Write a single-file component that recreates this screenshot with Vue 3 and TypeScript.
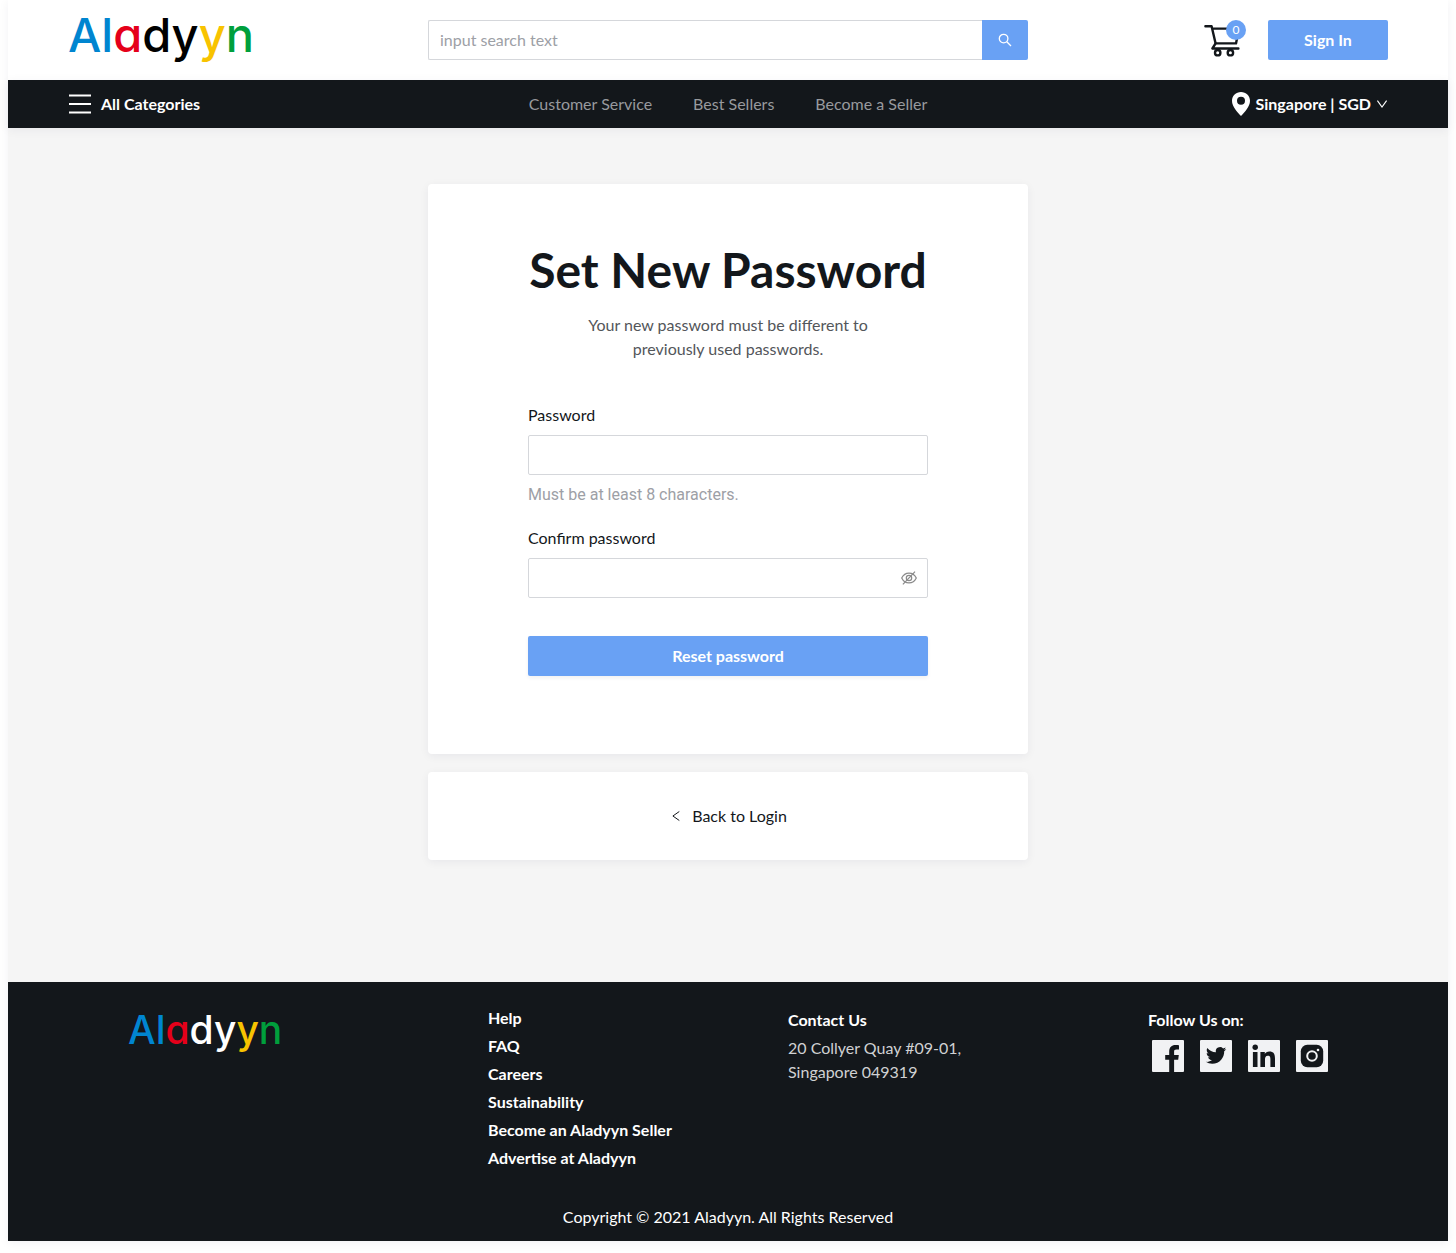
<script setup lang="ts">
import { ref } from 'vue'

interface Letter {
  char: string
  tone: string
}

const brand: Letter[] = [
  { char: 'A', tone: 'blue' },
  { char: 'l', tone: 'blue' },
  { char: 'a', tone: 'red' },
  { char: 'd', tone: 'ink' },
  { char: 'y', tone: 'ink' },
  { char: 'y', tone: 'yellow' },
  { char: 'n', tone: 'green' },
]

const navLinks: string[] = ['Customer Service', 'Best Sellers', 'Become a Seller']
const footerLinks: string[] = [
  'Help',
  'FAQ',
  'Careers',
  'Sustainability',
  'Become an Aladyyn Seller',
  'Advertise at Aladyyn',
]

const search = ref('')
const password = ref('')
const confirmation = ref('')
const revealed = ref(false)
const cartCount = ref(0)
</script>

<template>
  <div class="page">
    <header class="topbar">
      <a class="logo" href="#"><span v-for="(l, i) in brand" :key="i" :class="l.tone">{{ l.char }}</span></a>
      <form class="search" role="search" @submit.prevent>
        <input v-model="search" type="text" placeholder="input search text" aria-label="Search" />
        <button type="submit" aria-label="Search">
          <svg width="14" height="14" viewBox="0 0 14 14" fill="none" stroke="currentColor" stroke-width="1.3">
            <circle cx="5.6" cy="5.6" r="4.3" />
            <path d="M8.8 8.8 13 13" />
          </svg>
        </button>
      </form>
      <div class="account">
        <a class="cart" href="#" aria-label="Cart">
          <svg width="36" height="32" viewBox="0 0 36 32" fill="none" stroke="currentColor" stroke-width="2.4" stroke-linecap="round" stroke-linejoin="round">
            <path d="M1.400 2.200H7.600L11.600 19.400H32L35 4.600H8.200" />
            <path d="M11.600 19.400 8.400 24.500H34.400" />
            <circle cx="13.700" cy="28.700" r="2.700" />
            <circle cx="26.400" cy="28.700" r="2.700" />
          </svg>
          <span class="badge">{{ cartCount }}</span>
        </a>
        <button class="primary sign-in" type="button">Sign In</button>
      </div>
    </header>

    <nav class="navbar">
      <button class="plain categories" type="button">
        <svg width="23" height="20" viewBox="0 0 23 20" stroke="currentColor" stroke-width="2">
          <path d="M1 1.6H23M1 10H23M1 18.4H23" />
        </svg>
        All Categories
      </button>
      <div class="nav-links">
        <a v-for="link in navLinks" :key="link" href="#">{{ link }}</a>
      </div>
      <button class="plain region" type="button">
        <svg width="18" height="24" viewBox="0 0 18 24" fill="currentColor" fill-rule="evenodd">
          <path d="M9 0C4 0 0 3.9 0 8.8 0 14.6 5.2 20 9 24 12.800 20 18 14.600 18 8.800 18 3.900 14 0 9 0ZM9 4.800A4 4 0 1 1 9 12.800 4 4 0 0 1 9 4.800Z" />
        </svg>
        <span>Singapore | SGD</span>
        <svg width="11" height="8" viewBox="0 0 11 8" fill="none" stroke="currentColor" stroke-width="1.1">
          <path d="M.4.6 5 7 9.600.6" />
        </svg>
      </button>
    </nav>

    <main>
      <section class="card reset">
        <h1>Set New Password</h1>
        <p class="lead">Your new password must be different to previously used passwords.</p>
        <form @submit.prevent>
          <div class="field">
            <label for="password">Password</label>
            <input id="password" v-model="password" type="password" aria-describedby="hint" />
            <p id="hint" class="hint">Must be at least 8 characters.</p>
          </div>
          <div class="field">
            <label for="confirmation">Confirm password</label>
            <div class="input-wrap">
              <input id="confirmation" v-model="confirmation" :type="revealed ? 'text' : 'password'" />
              <button class="plain reveal" type="button" aria-label="Show password" @click="revealed = !revealed">
                <svg width="16" height="14" viewBox="0 0 16 14" fill="none" stroke="currentColor" stroke-width="1.2">
                  <path d="M.7 7C2.300 3.700 4.700 2.100 8 2.100S13.700 3.700 15.300 7C13.700 10.300 11.300 11.900 8 11.900S2.300 10.300.7 7Z" />
                  <circle cx="8" cy="7" r="2.700" />
                  <path d="M1.900 13.400 14 .6" />
                </svg>
              </button>
            </div>
          </div>
          <button class="primary submit" type="submit">Reset password</button>
        </form>
      </section>
      <section class="card back">
        <a href="#">
          <svg width="11" height="10" viewBox="-3 0 11 10" fill="none" stroke="currentColor" stroke-width="1">
            <path d="M7.300.5.9 5 7.300 9.500" />
          </svg>
          Back to Login
        </a>
      </section>
    </main>

    <footer>
      <div class="footer-grid">
        <a class="logo small" href="#"><span v-for="(l, i) in brand" :key="i" :class="l.tone">{{ l.char }}</span></a>
        <ul class="footer-links">
          <li v-for="link in footerLinks" :key="link"><a href="#">{{ link }}</a></li>
        </ul>
        <div class="contact">
          <h2>Contact Us</h2>
          <address>20 Collyer Quay #09-01,<br />Singapore 049319</address>
        </div>
        <div class="follow">
          <h2>Follow Us on:</h2>
          <div class="social">
            <a href="#" aria-label="Facebook">
              <svg width="32" height="32" viewBox="0 0 32 32">
                <rect width="32" height="32" rx="1" />
                <path class="mark" d="M17.200 32V19.700H13.200V14.900H17.200V11.400C17.200 7.300 19.700 5 23.400 5 25.100 5 26.600 5.100 27 5.200V9.500H24.500C22.500 9.500 22.100 10.400 22.100 11.800V14.900H26.800L26.200 19.700H22.100V32Z" />
              </svg>
            </a>
            <a href="#" aria-label="Twitter">
              <svg width="32" height="32" viewBox="0 0 32 32">
                <rect width="32" height="32" rx="1" />
                <path class="mark" d="M26.300 9.100C25.600 9.500 24.800 9.700 23.900 9.800 24.800 9.300 25.400 8.500 25.700 7.500 24.900 8 24 8.300 23.100 8.500A4.200 4.200 0 0 0 15.900 12.300C12.400 12.100 9.400 10.500 7.300 7.900 6.200 9.800 6.700 12.300 8.600 13.500 7.900 13.500 7.300 13.300 6.700 13 6.700 15 8.100 16.700 10 17.100 9.400 17.300 8.800 17.300 8.100 17.200 8.700 18.900 10.200 20.100 12 20.100 10.300 21.500 8.100 22.100 5.800 21.800 7.700 23 9.900 23.700 12.200 23.700 20 23.700 24.400 17.200 24.200 11.200 25 10.600 25.700 9.900 26.300 9.100Z" />
              </svg>
            </a>
            <a href="#" aria-label="LinkedIn">
              <svg width="32" height="32" viewBox="0 0 32 32">
                <rect width="32" height="32" rx="1" />
                <circle class="mark" cx="7.200" cy="7.200" r="2.700" />
                <path class="mark" d="M4.900 12H9.500V27H4.900ZM12.400 12H16.800V14C17.500 12.700 19.100 11.600 21.400 11.600 26.100 11.600 27 14.700 27 18.800V27H22.400V19.700C22.400 17.900 22.400 15.700 19.900 15.700S17 17.600 17 19.600V27H12.400Z" />
              </svg>
            </a>
            <a href="#" aria-label="Instagram">
              <svg width="32" height="32" viewBox="0 0 32 32">
                <rect width="32" height="32" rx="1" />
                <rect class="mark" x="4.800" y="4.800" width="22.400" height="22.400" rx="6.500" />
                <circle class="ring" cx="16" cy="16" r="4.800" />
                <circle cx="22" cy="10" r="1.300" />
              </svg>
            </a>
          </div>
        </div>
      </div>
      <p class="copyright">Copyright © 2021 Aladyyn. All Rights Reserved</p>
    </footer>
  </div>
</template>

<style>
body {
  margin: 0;
  background: #fff;
}
</style>

<style scoped>
.page {
  margin: 0 8px 12px;
  background: #f5f5f5;
  box-shadow: 0 2px 10px rgba(20, 24, 60, 0.06);
  color: #13171b;
  font: 400 16px/24px Lato, 'Liberation Sans', sans-serif;
}

* {
  box-sizing: border-box;
}

h1,
h2,
p,
ul {
  margin: 0;
  padding: 0;
}

a {
  color: inherit;
  text-decoration: none;
}

button,
input {
  font: inherit;
}

button {
  cursor: pointer;
}

svg {
  display: block;
  flex: none;
  overflow: visible;
}

.topbar {
  display: grid;
  grid-template-columns: 1fr minmax(0, 600px) 1fr;
  align-items: center;
  height: 80px;
  padding: 0 60px;
  background: #fff;
}

.logo {
  align-self: start;
  justify-self: start;
  margin-top: 11px;
  font: 500 47px/48px Inter, Lato, sans-serif;
  font-feature-settings: 'cv11';
}

.logo.small {
  margin-top: 6px;
  font-size: 39px;
  line-height: 40px;
}

.blue {
  color: #0085d0;
}

.red {
  color: #e5001a;
}

.ink {
  color: #000;
}

.small .ink {
  color: #fff;
}

.yellow {
  color: #f8c300;
}

.green {
  color: #009f3c;
}

.search {
  display: flex;
  height: 40px;
}

.search input {
  flex: 1;
  min-width: 0;
  padding: 0 11px;
  border: 1px solid #d5d7db;
  border-right: 0;
  border-radius: 2px 0 0 2px;
}

.search input::placeholder {
  color: #9da0a6;
}

.search button {
  display: grid;
  place-items: center;
  width: 46px;
  border: 0;
  border-radius: 0 2px 2px 0;
  background: #69a1f4;
  color: #fff;
}

.account {
  display: flex;
  align-items: center;
  justify-content: flex-end;
  gap: 28px;
}

.cart {
  position: relative;
}

.badge {
  position: absolute;
  top: -4px;
  right: -6px;
  width: 20px;
  height: 20px;
  border-radius: 10px;
  background: #69a1f4;
  color: #fff;
  font-size: 12px;
  line-height: 20px;
  text-align: center;
}

.primary {
  height: 40px;
  padding: 0;
  border: 0;
  border-radius: 2px;
  background: #69a1f4;
  color: #fff;
  font-weight: 700;
}

.sign-in {
  width: 120px;
}

.plain {
  display: flex;
  align-items: center;
  padding: 0;
  border: 0;
  background: none;
  color: inherit;
}

.navbar {
  position: relative;
  display: grid;
  grid-template-columns: 1fr auto 1fr;
  align-items: center;
  height: 48px;
  padding: 0 60px;
  background: #13171b;
  box-shadow: 0 2px 10px rgba(20, 24, 60, 0.06);
  color: #fff;
  font-weight: 700;
}

.categories {
  gap: 10px;
  justify-self: start;
}

.nav-links {
  display: flex;
  gap: 41px;
  color: #989a9e;
  font-weight: 400;
}

.region {
  justify-self: end;
  gap: 6px;
}

main {
  display: grid;
  grid-template-columns: minmax(0, 600px);
  justify-content: center;
  gap: 18px;
  padding: 56px 0 122px;
}

.card {
  border-radius: 4px;
  background: #fff;
  box-shadow: 0 2px 10px rgba(20, 24, 60, 0.06);
}

.reset {
  padding: 58px 100px 78px;
}

h1 {
  font-size: 48px;
  font-weight: 700;
  line-height: 56px;
  text-align: center;
  white-space: nowrap;
}

.lead {
  max-width: 300px;
  margin: 15px auto 42px;
  color: #53565a;
  text-align: center;
}

.field {
  margin-bottom: 19px;
}

.field label {
  display: block;
  margin-bottom: 8px;
}

.field input {
  display: block;
  width: 100%;
  height: 40px;
  padding: 0 11px;
  border: 1px solid #d5d7db;
  border-radius: 2px;
  background: #fff;
}

.hint {
  margin-top: 8px;
  color: #9da0a6;
  font-family: Roboto, sans-serif;
}

.input-wrap {
  position: relative;
}

.reveal {
  position: absolute;
  top: 0;
  right: 11px;
  height: 40px;
  color: #8a8a8a;
}

.submit {
  width: 100%;
  margin-top: 19px;
  box-shadow: 0 2px 4px rgba(0, 0, 0, 0.06);
}

.back {
  display: grid;
  place-items: center;
  height: 88px;
}

.back a {
  display: flex;
  align-items: center;
  gap: 12px;
}

footer {
  padding: 22px 120px 12px;
  background: #13171b;
  color: #fff;
}

.footer-grid {
  display: grid;
  grid-template-columns: minmax(0, 6fr) minmax(0, 5fr) minmax(0, 6fr) minmax(0, 3fr);
}

.footer-links {
  list-style: none;
  font-weight: 700;
  line-height: 28px;
}

.contact,
.follow {
  padding-top: 4px;
}

h2 {
  margin-bottom: 4px;
  font-size: 16px;
  font-weight: 700;
  line-height: 24px;
  white-space: nowrap;
}

address {
  color: #d0d1d3;
  font-style: normal;
}

.social {
  display: flex;
  gap: 16px;
  padding: 4px;
}

.social svg {
  fill: #f1f2f4;
}

.social .mark {
  fill: #13171b;
}

.social .ring {
  fill: none;
  stroke: #f1f2f4;
  stroke-width: 2;
}

.copyright {
  margin-top: 33px;
  text-align: center;
}
</style>
